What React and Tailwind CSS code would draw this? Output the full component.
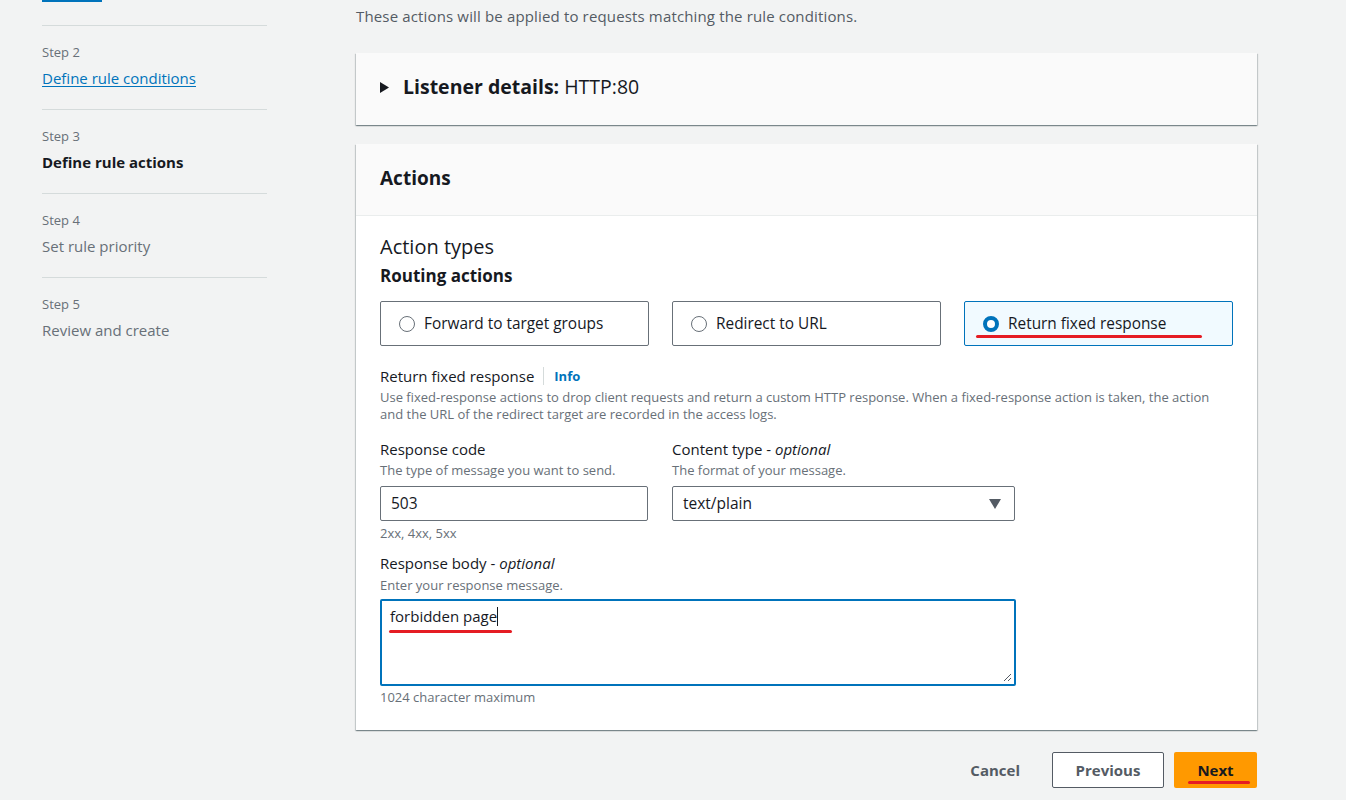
import React from "react";

const font = { fontFamily: '"Open Sans", "Noto Sans", Arial, sans-serif' };

function NavItem({ step, title, kind }) {
  return (
    <div className="border-t border-[#d5dbdb] pt-[16px] pb-[21px]">
      <div className="text-[13px] leading-[20px] text-[#687078]">{step}</div>
      <div className="mt-[6px] text-[15px] leading-[20px]">
        {kind === "link" && (
          <a className="text-[#0073bb] underline underline-offset-2" href="#">{title}</a>
        )}
        {kind === "active" && <span className="font-bold text-[#16191f]">{title}</span>}
        {kind === "plain" && <span className="text-[#687078]">{title}</span>}
      </div>
    </div>
  );
}

function Radio({ checked }) {
  return checked ? (
    <span className="inline-block w-[16px] h-[16px] rounded-full border-[4px] border-[#0073bb] bg-white shrink-0" />
  ) : (
    <span className="inline-block w-[16px] h-[16px] rounded-full border border-[#687078] bg-white shrink-0" />
  );
}

function Tile({ label, checked }) {
  return (
    <div
      className={
        "relative h-[45px] flex items-center pl-[18px] gap-[9px] rounded-[2px] border " +
        (checked ? "border-[#0073bb] bg-[#f1faff]" : "border-[#687078] bg-white")
      }
    >
      <Radio checked={checked} />
      <span className="text-[15.4px] text-[#16191f]">{label}</span>
      {checked && (
        <span className="absolute left-[11px] top-[33px] w-[226px] h-[3px] rounded-full bg-[#e51c23]" />
      )}
    </div>
  );
}

const shadow =
  "shadow-[0_1px_1px_0_rgba(0,28,36,0.3),1px_1px_1px_0_rgba(0,28,36,0.15),-1px_1px_1px_0_rgba(0,28,36,0.15)]";

export default function App() {
  return (
    <div className="min-h-[800px] w-full bg-[#f2f3f3] text-[#16191f] overflow-hidden" style={font}>
      <div className="flex pl-[42px]">
        {/* Left nav */}
        <div className="w-[225px] shrink-0">
          <div className="w-[60px] h-[2px] bg-[#0073bb]" />
          <div className="h-[23px]" />
          <NavItem step="Step 2" title="Define rule conditions" kind="link" />
          <NavItem step="Step 3" title="Define rule actions" kind="active" />
          <NavItem step="Step 4" title="Set rule priority" kind="plain" />
          <NavItem step="Step 5" title="Review and create" kind="plain" />
        </div>

        {/* Main */}
        <div className="ml-[89px] w-[901px] shrink-0">
          <p className="pt-[6px] text-[15px] tracking-[0.15px] leading-[20px] text-[#545b64]">
            These actions will be applied to requests matching the rule conditions.
          </p>

          <div className={"mt-[27px] h-[72px] bg-[#fafafa] flex items-center pl-[24px] pb-[4px] gap-[14px] " + shadow}>
            <svg width="9" height="11" viewBox="0 0 9 11"><path d="M0 0 L9 5.5 L0 11 Z" fill="#16191f" /></svg>
            <span className="text-[19.5px] leading-[24px]">
              <span className="font-bold">Listener details:</span> HTTP:80
            </span>
          </div>

          <div className={"mt-[19px] bg-white " + shadow}>
            <div className="h-[72px] bg-[#fafafa] border-b border-[#eaeded] flex items-center pl-[24px] pb-[4px]">
              <span className="text-[19px] leading-[24px] font-bold">Actions</span>
            </div>
            <div className="px-[24px] pt-[19px] pb-[25px]">
              <div className="text-[20px] leading-[24px]">Action types</div>
              <div className="mt-[7px] text-[17px] leading-[20px] font-bold">Routing actions</div>

              <div className="mt-[15px] grid grid-cols-3 gap-[23px] w-[853px]">
                <Tile label="Forward to target groups" />
                <Tile label="Redirect to URL" />
                <Tile label="Return fixed response" checked />
              </div>

              <div className="mt-[20px] flex items-center text-[15px] leading-[20px]">
                <span>Return fixed response</span>
                <span className="ml-[9px] mr-[10px] w-px h-[18px] bg-[#d5dbdb]" />
                <span className="text-[13px] font-bold text-[#0073bb]">Info</span>
              </div>
              <p className="mt-[3px] text-[13px] leading-[17px] text-[#687078] w-[850px]">
                Use fixed-response actions to drop client requests and return a custom HTTP response. When a fixed-response action is taken, the action and the URL of the redirect target are recorded in the access logs.
              </p>

              <div className="mt-[16px] flex gap-[24px]">
                <div className="w-[268px]">
                  <div className="text-[15px] leading-[20px]">Response code</div>
                  <div className="mt-[3px] text-[13px] leading-[17px] text-[#687078]">The type of message you want to send.</div>
                  <div className="mt-[7px] h-[35px] border border-[#687078] rounded-[2px] flex items-center pl-[10px] text-[15.5px] bg-white">503</div>
                  <div className="mt-[4px] text-[13px] leading-[16px] text-[#687078]">2xx, 4xx, 5xx</div>
                </div>
                <div className="w-[343px]">
                  <div className="text-[15px] leading-[20px]">Content type - <i>optional</i></div>
                  <div className="mt-[3px] text-[13px] leading-[17px] text-[#687078]">The format of your message.</div>
                  <div className="mt-[7px] h-[35px] border border-[#687078] rounded-[2px] flex items-center justify-between pl-[10px] pr-[13px] text-[15.5px] bg-white">
                    <span>text/plain</span>
                    <svg width="12" height="10" viewBox="0 0 12 10"><path d="M0 0 H12 L6 10 Z" fill="#545b64" /></svg>
                  </div>
                </div>
              </div>

              <div className="mt-[12px] text-[15px] leading-[20px]">Response body - <i>optional</i></div>
              <div className="mt-[4px] text-[13px] leading-[17px] text-[#687078]">Enter your response message.</div>
              <div className="relative mt-[5px] w-[636px] h-[87px] border-2 border-[#0073bb] rounded-[2px] bg-white px-[8px] pt-[3px]">
                <span className="text-[15px] leading-[20px]">forbidden page</span>
                <span className="inline-block align-middle w-px h-[19px] bg-[#16191f] -mt-[3px]" />
                <span className="absolute left-[7px] top-[29px] w-[123px] h-[3px] rounded-full bg-[#e51c23]" />
                <svg className="absolute right-[2px] bottom-[2px]" width="9" height="9" viewBox="0 0 9 9">
                  <path d="M8 1 L1 8 M8 5 L5 8" stroke="#545b64" strokeWidth="1" />
                </svg>
              </div>
              <div className="mt-[3px] text-[13px] leading-[16px] text-[#687078]">1024 character maximum</div>
            </div>
          </div>

          <div className="mt-[22px] flex justify-end items-center">
            <button className="h-[35px] px-[20px] text-[15px] font-bold text-[#545b64]">Cancel</button>
            <button className="ml-[12px] h-[36px] w-[112px] border border-[#545b64] rounded-[2px] bg-white text-[15px] font-bold text-[#545b64]">Previous</button>
            <button className="relative ml-[10px] h-[36px] w-[83px] rounded-[2px] bg-[#ff9900] text-[15px] font-bold text-[#16191f]">
              Next
              <span className="absolute left-[14px] top-[29px] w-[62px] h-[3px] rounded-full bg-[#e51c23]" />
            </button>
          </div>
        </div>
      </div>
    </div>
  );
}
